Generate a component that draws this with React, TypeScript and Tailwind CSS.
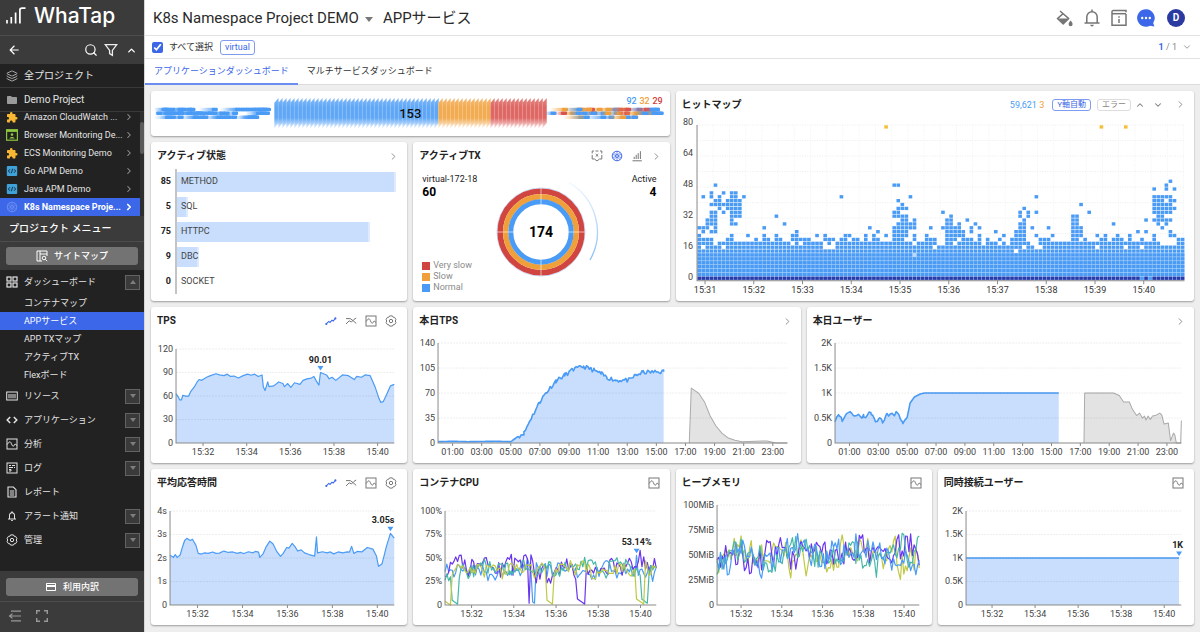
import React from "react";
import {
  MdArrowBack,
  MdCreditCard,
  MdExtension,
  MdFolder,
  MdFullscreen,
  MdNotificationsNone,
} from "react-icons/md";
import { ChevronDown, ChevronRight, ChevronUp, Layers, Search } from "lucide-react";

type Pt = [number, number];
type IconProps = { className?: string };

/* ---------- icons ---------- */

const WaveBoxIcon = ({ className = "size-[12px]" }: IconProps) => (
  <svg viewBox="0 0 12 12" className={className} fill="none" stroke="currentColor">
    <rect x="1" y="1" width="10" height="10" />
    <path d="M1 6.5 L3 4.2 C4 3.4 4.6 3.8 5.3 5.5 L6.2 7.3 C7 8.8 7.6 8.4 8.3 7.2 L9.2 6 L11 7.5" />
  </svg>
);

const TrendIcon = () => (
  <svg viewBox="0 0 12 12" className="size-[12px]" fill="none" stroke="#3f6ae8" strokeWidth="1.1">
    <path d="M1 9.2 L3.8 6.4 L5 7.4 L7 5.2 L8.2 6 L10.6 3.2" />
    <circle cx="1.3" cy="9" r=".5" />
    <circle cx="10.4" cy="3.4" r=".5" />
  </svg>
);

const CompareIcon = () => (
  <svg viewBox="0 0 12 12" className="size-[12px]" fill="none" stroke="#777" strokeWidth="1">
    <path d="M1 3.6 H5.2 L8 5.6 L11.2 8.4" />
    <path d="M1 9 L4.2 5.8 L6.4 7 L9 4.4 L11.2 3" />
  </svg>
);

const HexGearIcon = ({ className = "size-[12px]" }: IconProps) => (
  <svg viewBox="0 0 12 12" className={className} fill="none" stroke="currentColor">
    <path d="M4.6 .9 H7.4 L8.1 2.2 L9.6 2.4 L10.9 4.4 L10.3 6 L10.9 7.6 L9.6 9.6 L8.1 9.8 L7.4 11.1 H4.6 L3.9 9.8 L2.4 9.6 L1.1 7.6 L1.7 6 L1.1 4.4 L2.4 2.4 L3.9 2.2 Z" />
    <circle cx="6" cy="6" r="1.7" />
  </svg>
);

const GridIcon = () => (
  <svg viewBox="0 0 12 12" className="size-[12px]" fill="none" stroke="currentColor" strokeWidth="1.2">
    <rect x="1" y="1" width="4" height="4" />
    <rect x="7" y="1" width="4" height="4" />
    <rect x="1" y="7" width="4" height="4" />
    <rect x="7" y="7" width="4" height="4" />
  </svg>
);

const ResourceIcon = () => (
  <svg viewBox="0 0 12 12" className="size-[12px]" fill="none" stroke="currentColor">
    <rect x=".7" y="2" width="10.6" height="8" />
    <path d="M3 4 V8.3 M5 4 V8.3 M7 4 V8.3 M9 4 V8.3" />
  </svg>
);

const CodeIcon = () => (
  <svg viewBox="0 0 12 12" className="size-[12px]" fill="none" stroke="currentColor" strokeWidth="1.5">
    <path d="M4.2 3 L1.2 6 L4.2 9 M7.8 3 L10.8 6 L7.8 9" />
  </svg>
);

const LogIcon = () => (
  <svg viewBox="0 0 12 12" className="size-[12px]" fill="none" stroke="currentColor">
    <rect x="1" y="1" width="10" height="10" />
    <path d="M3 3.5 H5 M6 3.5 H9 M3 5.5 H7 M8 5.5 H9 M3 7.5 H5 V9 H3" />
  </svg>
);

const ReportIcon = () => (
  <svg viewBox="0 0 12 12" className="size-[12px]" fill="none" stroke="currentColor" strokeWidth="1.1">
    <path d="M2 1 H7.3 L10 3.7 V11 H2 Z M3.8 5 H8.2 M3.8 7 H8.2 M3.8 9 H8.2" />
  </svg>
);

const SitemapIcon = () => (
  <svg viewBox="0 0 12 12" className="size-[12px]" fill="none" stroke="currentColor">
    <path d="M11 6 V1 H1 V11 H6 M4 1 V11 M4 4 H11" />
    <circle cx="8" cy="8" r="1.8" />
    <path d="M9.4 9.4 L11.2 11.2" />
  </svg>
);

const BrowserIcon = () => (
  <svg viewBox="0 0 12 12" className="size-[12px]">
    <rect x=".6" y=".8" width="10.8" height="10.4" fill="#222" stroke="#8cc63f" strokeWidth="1.2" />
    <rect x=".5" y=".5" width="11" height="2.4" fill="#8cc63f" />
    <circle cx="6" cy="5.6" r="1.3" fill="#8cc63f" />
    <path d="M3.4 9.6 C3.6 7.4 8.4 7.4 8.6 9.6 Z" fill="#8cc63f" />
  </svg>
);

const ApmIcon = () => (
  <svg viewBox="0 0 12 12" className="size-[12px]">
    <rect x=".8" y="1" width="10.4" height="10" rx="1" fill="#3fa3da" />
    <path d="M4 4.2 L2.4 6 L4 7.8 M8 4.2 L9.6 6 L8 7.8 M6.6 3.8 L5.4 8.2" fill="none" stroke="#12324a" strokeWidth="1" />
  </svg>
);

const WheelIcon = ({ className = "size-[12px] text-[#3f6ae8]" }: IconProps) => (
  <svg viewBox="0 0 12 12" className={className} fill="none" stroke="currentColor" strokeWidth="1">
    <circle cx="6" cy="6" r="4.8" />
    <circle cx="6" cy="6" r="1.4" />
    <path d="M6 1 V4.4 M6 7.6 V11 M1.4 4.2 L4.6 5.5 M7.4 6.5 L10.6 7.8 M10.6 4.2 L7.4 5.5 M4.6 6.5 L1.4 7.8 M3 9.8 L5.2 7.2 M9 9.8 L6.8 7.2 M3 2.2 L5.2 4.8 M9 2.2 L6.8 4.8" strokeWidth=".7" />
  </svg>
);

const ShieldXIcon = () => (
  <svg viewBox="0 0 12 12" className="size-[12px]" fill="none" stroke="#777">
    <path d="M3 1 H1.2 V3.5 M9 1 H10.8 V3.5 M1.2 5 V9 H3.5 L6 11 L8.5 9 H10.8 V5 M4.5 1 H7.5" />
    <path d="M4.7 4 L7.3 6.6 M7.3 4 L4.7 6.6" />
  </svg>
);

const BarsIcon = () => (
  <svg viewBox="0 0 12 12" className="size-[12px]" fill="none" stroke="#777">
    <path d="M1.5 10.8 H10.8 M3.2 9 V6.8 M5.2 9 V4.8 M7.2 9 V3.2 M9.4 9 V1.2" />
  </svg>
);

const PaintIcon = () => (
  <svg viewBox="0 0 18 18" className="size-[18px]">
    <path d="M4 2 L12.8 9.6 L7.2 15 L1.4 9.6 L7.4 4.4" fill="none" stroke="#757575" strokeWidth="1.4" strokeLinejoin="round" />
    <path d="M2 9.4 H12.6 L7.2 14.8 Z" fill="#757575" />
    <path d="M14.6 11.6 C15.8 13.2 16.6 14.2 16.6 15.2 A2 2 0 0 1 12.6 15.2 C12.6 14.2 13.4 13.2 14.6 11.6 Z" fill="#757575" />
  </svg>
);

const ManualIcon = () => (
  <svg viewBox="0 0 18 18" className="size-[18px]" fill="none" stroke="#757575" strokeWidth="1.5">
    <path d="M16 5 V16.2 H2 V2.8 C2 1.8 2.6 1.4 3.4 1.4 H16 V3.2" />
    <path d="M2 4.7 H16" />
    <path d="M9 7.2 V8.8 M9 10 V14" />
  </svg>
);

const ChatIcon = () => (
  <svg viewBox="0 0 18 18" className="size-[18px]">
    <path d="M9 .2 A8.8 8.8 0 1 0 13 16.8 L17.4 17.6 L16.2 13.9 A8.8 8.8 0 0 0 9 .2 Z" fill="#3b67e8" />
    <circle cx="5.2" cy="9" r="1.2" fill="#fff" />
    <circle cx="9" cy="9" r="1.2" fill="#fff" />
    <circle cx="12.8" cy="9" r="1.2" fill="#fff" />
  </svg>
);

const FilterIcon = () => (
  <svg viewBox="0 0 14 14" className="size-[14px]" fill="none" stroke="#eee" strokeWidth="1.3">
    <path d="M1.2 1.6 H12.8 L8.4 7.4 V12.4 L5.6 10.6 V7.4 Z" />
  </svg>
);

const LogoMark = () => (
  <svg viewBox="0 0 20 18" className="h-[18px] w-[20px]" fill="none" stroke="#fff" strokeWidth="1.7">
    <path d="M1 13 V16.5 M5.3 10 V16.5 M9.6 5.5 V16.5 M13.9 16.5 V3 Q13.9 1.2 16 1.2 H19.5" />
  </svg>
);

/* ---------- sidebar ---------- */

const projects = [
  { name: "Amazon CloudWatch ...", icon: <MdExtension className="size-[13px] text-[#f7b733]" /> },
  { name: "Browser Monitoring De...", icon: <BrowserIcon /> },
  { name: "ECS Monitoring Demo", icon: <MdExtension className="size-[13px] text-[#f7b733]" /> },
  { name: "Go APM Demo", icon: <ApmIcon /> },
  { name: "Java APM Demo", icon: <ApmIcon /> },
  { name: "K8s Namespace Proje...", icon: <WheelIcon className="size-[12px] text-[#6d8ff2]" />, active: true },
];

const dashboards = ["コンテナマップ", "APPサービス", "APP TXマップ", "アクティブTX", "Flexボード"];

const menus: { name: string; icon: React.ReactNode; leaf?: boolean }[] = [
  { name: "リソース", icon: <ResourceIcon /> },
  { name: "アプリケーション", icon: <CodeIcon /> },
  { name: "分析", icon: <WaveBoxIcon /> },
  { name: "ログ", icon: <LogIcon /> },
  { name: "レポート", icon: <ReportIcon />, leaf: true },
  { name: "アラート通知", icon: <MdNotificationsNone className="size-[14px]" /> },
  { name: "管理", icon: <HexGearIcon /> },
];

function Toggle({ open, label }: { open?: boolean; label: string }) {
  return (
    <button
      aria-label={label}
      className="ml-auto mr-1 flex size-[15px] items-center justify-center border border-[#636363] bg-[#3a3a3a]"
    >
      <svg viewBox="0 0 6 4" className="h-[4px] w-[6px]" fill="#7d7d7d">
        {open ? <path d="M0 4 L3 0 L6 4 Z" /> : <path d="M0 0 H6 L3 4 Z" />}
      </svg>
    </button>
  );
}

function Sidebar() {
  return (
    <aside className="flex w-36 shrink-0 flex-col bg-[#222] text-[9px] text-[#e4e4e4]">
      <div className="flex h-9 items-center gap-2 border-b border-[#4d4d4d] bg-[#3b3b3b] pb-1 pl-1.5 text-white">
        <LogoMark />
        <span className="font-['Inter'] text-[21px] font-medium leading-6">WhaTap</span>
      </div>
      <div className="flex h-7 items-center gap-1.5 bg-[#3b3b3b] px-[7px] text-white">
        <button aria-label="戻る" className="mr-auto">
          <MdArrowBack className="size-[14px]" />
        </button>
        <button aria-label="検索">
          <Search className="size-[14px]" strokeWidth={2} />
        </button>
        <button aria-label="フィルター">
          <FilterIcon />
        </button>
        <button aria-label="閉じる" className="pl-0.5">
          <ChevronUp className="size-[11px]" strokeWidth={3} />
        </button>
      </div>
      <a href="#all" className="flex h-6 items-center gap-1.5 border-b border-[#3a3a3a] pl-1.5 text-[10px]">
        <Layers className="size-[12px] text-[#aaa]" strokeWidth={2} />
        全プロジェクト
      </a>
      <a href="#demo" className="flex h-6 items-center gap-1.5 border-b border-[#3a3a3a] pl-1.5 text-[10px]">
        <MdFolder className="size-[12px] text-[#9a9a9a]" />
        Demo Project
      </a>
      <div className="flex h-[104px]">
        <ul className="flex min-w-0 flex-1 flex-col justify-end overflow-hidden">
          {projects.map((p) => (
            <li key={p.name} className="shrink-0">
              <a
                href="#project"
                className={
                  p.active
                    ? "flex h-[18px] items-center gap-1.5 bg-[#3b67e8] pl-1.5 pr-1.5 font-bold text-white"
                    : "flex h-[18px] items-center gap-1.5 pl-1.5 pr-1.5"
                }
              >
                <span className="flex w-[12px] shrink-0 justify-center">{p.icon}</span>
                <span className="w-0 flex-1 whitespace-nowrap">{p.name}</span>
                <ChevronRight
                  className={p.active ? "size-[10px] shrink-0 text-white" : "size-[10px] shrink-0 text-[#999]"}
                  strokeWidth={p.active ? 4 : 2.5}
                />
              </a>
            </li>
          ))}
        </ul>
        <div className="w-1 bg-[#2e2e2e] pt-2.5">
          <div className="h-8 rounded-sm bg-[#5a5a5a]" />
        </div>
      </div>
      <div className="flex h-[25px] items-center bg-[#3b3b3b] pl-[9px] text-[10px] font-medium text-white">
        プロジェクト メニュー
      </div>
      <div className="border-t border-[#4d4d4d] bg-[#3b3b3b] px-1.5 pb-[5px] pt-[5px]">
        <button className="flex h-[18px] w-full items-center justify-center gap-1.5 rounded-[3px] bg-[#737373] font-medium text-white">
          <SitemapIcon />
          サイトマップ
        </button>
      </div>
      <nav>
        <div className="flex h-6 items-center gap-1.5 pl-1.5">
          <GridIcon />
          ダッシューボード
          <Toggle open label="ダッシューボードを閉じる" />
        </div>
        {dashboards.map((d, i) => (
          <a
            key={d}
            href="#dashboard"
            className={
              i === 1
                ? "flex h-[18px] items-center bg-[#3b67e8] pl-6 pt-px text-white"
                : "flex h-[18px] items-center pl-6 pt-px"
            }
          >
            {d}
          </a>
        ))}
        {menus.map((m) => (
          <div key={m.name} className="flex h-6 items-center gap-1.5 pl-1.5">
            <span className="flex w-3 shrink-0 justify-center">{m.icon}</span>
            {m.name}
            {!m.leaf && <Toggle label={m.name} />}
          </div>
        ))}
      </nav>
      <div className="mt-auto bg-[#3b3b3b] px-1.5 pb-[5px] pt-[7px]">
        <button className="flex h-[18px] w-full items-center justify-center gap-1.5 rounded-[3px] bg-[#737373] font-medium text-white">
          <MdCreditCard className="size-[12px]" />
          利用内訳
        </button>
      </div>
      <div className="flex h-[31px] items-center gap-3 border-t border-[#4d4d4d] bg-[#3b3b3b] pb-0.5 pl-2 text-[#999]">
        <button aria-label="メニューを折りたたむ">
          <svg viewBox="0 0 14 12" className="h-[12px] w-[14px]" fill="none" stroke="currentColor" strokeWidth="1.2">
            <path d="M3 1.2 H13 M1.5 6 H13 M3 10.8 H13 M4.5 3.6 L1.5 6 L4.5 8.4" />
          </svg>
        </button>
        <button aria-label="全画面">
          <svg viewBox="0 0 12 12" className="ml-0.5 size-[12px]" fill="none" stroke="currentColor" strokeWidth="1.4">
            <path d="M.7 4 V.7 H4 M8 .7 H11.3 V4 M11.3 8 V11.3 H8 M4 11.3 H.7 V8" />
          </svg>
        </button>
      </div>
    </aside>
  );
}

/* ---------- cards ---------- */

function Card({
  title,
  tools,
  className,
  children,
}: {
  title?: string;
  tools?: React.ReactNode;
  className: string;
  children: React.ReactNode;
}) {
  return (
    <section className={`min-w-0 overflow-hidden rounded-[3px] bg-white shadow-[0_1px_2px_rgba(0,0,0,0.35)] ${className}`}>
      {title && (
        <header className="flex h-[26px] items-center justify-between pl-1.5 pr-2.5 pt-0.5">
          <h2 className="text-[10px] font-bold text-[#222]">{title}</h2>
          <div className="flex items-center gap-2 text-[#777]">{tools}</div>
        </header>
      )}
      {children}
    </section>
  );
}

const More = () => (
  <button aria-label="詳細" className="-mr-0.5">
    <ChevronRight className="size-[11px] text-[#888]" strokeWidth={2} />
  </button>
);

const SeriesTools = () => (
  <>
    <button aria-label="折れ線">
      <TrendIcon />
    </button>
    <button aria-label="比較">
      <CompareIcon />
    </button>
    <button aria-label="ウィジェット">
      <WaveBoxIcon />
    </button>
    <button aria-label="設定">
      <HexGearIcon />
    </button>
  </>
);

const BoxTool = () => (
  <button aria-label="ウィジェット">
    <WaveBoxIcon />
  </button>
);

/* ---------- charts ---------- */

type Series = { points: Pt[]; color: string; fill?: string; width?: number };

function Chart({
  width,
  height = 130,
  left,
  right,
  top = 16,
  bottom = 110,
  xMax,
  yMax,
  yTicks,
  xTicks,
  series,
  marker,
}: {
  width: number;
  height?: number;
  left: number;
  right: number;
  top?: number;
  bottom?: number;
  xMax: number;
  yMax: number;
  yTicks: string[];
  xTicks: [number, string][];
  series: Series[];
  marker?: { x: number; y: number; text: string; end?: boolean };
}) {
  const sx = (x: number) => left + (x / xMax) * (right - left);
  const sy = (y: number) => bottom - (y / yMax) * (bottom - top);
  const line = (p: Pt[]) => p.map(([x, y]) => `${sx(x).toFixed(1)},${sy(y).toFixed(1)}`).join(" ");
  return (
    <svg viewBox={`0 0 ${width} ${height}`} className="block h-auto w-full text-[9px]">
      {series.map((s, i) => (
        <g key={i}>
          {s.fill && (
            <polygon
              points={`${sx(s.points[0][0])},${bottom} ${line(s.points)} ${sx(s.points[s.points.length - 1][0])},${bottom}`}
              fill={s.fill}
            />
          )}
          <polyline points={line(s.points)} fill="none" stroke={s.color} strokeWidth={s.width ?? 1.2} strokeLinejoin="round" />
        </g>
      ))}
      {yTicks.map((t, i) => {
        const y = top + ((bottom - top) * i) / (yTicks.length - 1);
        return (
          <g key={t}>
            {i < yTicks.length - 1 && (
              <line x1={left} x2={right} y1={y} y2={y} stroke="#000" strokeOpacity=".09" strokeDasharray="2 1" strokeWidth=".8" />
            )}
            <text x={left - 3} y={y + 2.5} textAnchor="end" fill="#444">
              {t}
            </text>
          </g>
        );
      })}
      <path d={`M${left} ${top} V${bottom} H${right}`} fill="none" stroke="#8a8a8a" />
      {xTicks.map(([x, t]) => (
        <g key={t}>
          <line x1={x} x2={x} y1={bottom} y2={bottom + 3} stroke="#8a8a8a" />
          <text x={x} y={bottom + 12} textAnchor="middle" fill="#444">
            {t}
          </text>
        </g>
      ))}
      {marker && (
        <g>
          <text
            x={sx(marker.x) + (marker.end ? 4 : 0)}
            y={sy(marker.y) - 10}
            textAnchor={marker.end ? "end" : "middle"}
            fontWeight="700"
            fill="#222"
          >
            {marker.text}
          </text>
          <path d={`M${sx(marker.x) - 3} ${sy(marker.y) - 6.5} h6 l-3 4.5 z`} fill="#4a9bf5" />
        </g>
      )}
    </svg>
  );
}

const BLUE = "#4a9bf5";
const BLUE_FILL = "#c8defc";

function seeded(seed: number) {
  let s = seed;
  return () => {
    s = (s * 16807) % 2147483647;
    return s / 2147483647;
  };
}

/* Densify a curve and add a small jitter to it. */
function jitter(points: Pt[], step: number, amount: number, seed: number): Pt[] {
  const rnd = seeded(seed);
  const out: Pt[] = [];
  for (let i = 0; i < points.length - 1; i++) {
    const [x0, y0] = points[i];
    const [x1, y1] = points[i + 1];
    for (let x = x0; x < x1; x += step) {
      const y = y0 + ((y1 - y0) * (x - x0)) / (x1 - x0);
      out.push([x, y < 10 ? y : y + (rnd() - 0.5) * amount]);
    }
  }
  out.push(points[points.length - 1]);
  return out;
}

/* A noisy band around a level; dips overwrite a range with given values. */
function band(seed: number, level: number, amp: number, dips: [number, number, number][] = []): Pt[] {
  const rnd = seeded(seed);
  const out: Pt[] = [];
  let drift = 0;
  for (let i = 0; i <= 118; i++) {
    drift = drift * 0.65 + (rnd() - 0.5) * amp;
    let v = level + drift + (rnd() - 0.5) * amp;
    for (const [a, b, low] of dips) if (i >= a && i <= b) v = low + (b - i) * 1.4;
    out.push([i / 1.18, v]);
  }
  return out;
}

const minutes = (start: number, step: number): [number, string][] =>
  ["15:32", "15:34", "15:36", "15:38", "15:40"].map((t, i) => [start + step * i, t]);

const hours = (left: number, right: number): [number, string][] =>
  Array.from({ length: 12 }, (_, i) => {
    const h = i * 2 + 1;
    return [left + ((right - left) * h) / 24, `${String(h).padStart(2, "0")}:00`];
  });

const tps: Pt[] = [
  [0, 63], [1, 59], [1.7, 55], [2.5, 55], [3.1, 61], [4.3, 60], [5.8, 60], [6.8, 66], [8.2, 71], [9.7, 78], [10.6, 81],
  [11.8, 80], [14, 84], [15.8, 86], [18.3, 88.5], [20, 87], [22, 86], [23.5, 88], [25, 85], [26.6, 85.5], [28.6, 83],
  [30.8, 86], [32.8, 88], [34.3, 86.5], [36, 88], [37.7, 85], [39.4, 87], [40, 72], [40.8, 67], [42, 78], [42.6, 72],
  [44.8, 73], [47, 78], [49, 76], [49.7, 72], [51.2, 76], [52.6, 71], [54.3, 77], [56.8, 75], [58.2, 80], [60, 82],
  [62, 83], [63.2, 85], [64.3, 79], [65.5, 74], [66.2, 90], [69, 87], [70.2, 82], [71.5, 84], [73.2, 80], [76.3, 87],
  [79, 86], [81.7, 81], [82.8, 85], [85, 84], [86.6, 87], [89, 86], [91.2, 72], [93, 57], [93.8, 52], [95, 53],
  [96.2, 60], [98.3, 73], [100, 75],
];

const response: Pt[] = [
  [0, 2.12], [1.5, 2.03], [2.3, 2.15], [3.2, 2.03], [4.5, 2.13], [5.5, 2.45], [6.5, 2.75], [7.5, 2.84], [9, 2.75],
  [10, 2.8], [11.5, 2.55], [12.6, 2.2], [14, 2.17], [15.5, 2.22], [17, 2.2], [19, 2.26], [20.5, 2.2], [22, 2.21],
  [24, 2.3], [26, 2.24], [28, 2.26], [30, 2.2], [31.5, 2.24], [33, 2.19], [35, 2.27], [37, 2.22], [38, 2.28],
  [39.5, 2.25], [40, 2.03], [41.5, 2.18], [43, 2.5], [44.5, 2.72], [46, 2.6], [47.5, 2.3], [49.3, 2.07], [50.5, 2.2],
  [52, 2.45], [53, 2.42], [54.5, 2.62], [56, 2.45], [57, 2.3], [58.5, 2.35], [60, 2.22], [62, 2.15], [64.5, 2.08],
  [65.3, 2.9], [65.8, 2.22], [68, 2.27], [70, 2.22], [71.5, 2.26], [73, 2.18], [75, 2.26], [77, 2.22], [79, 2.26],
  [80, 2.25], [81, 2.5], [82, 2.2], [83.5, 2.28], [85.5, 2.26], [88, 2.45],
  [90.5, 2.38], [92, 2.1], [93, 1.65], [94.5, 1.75], [95.5, 2.1], [96.5, 2.5], [98.3, 3.05], [100, 2.85],
];

const todayTps = jitter(
  [
    [0, 2], [1, 2.5], [2, 2], [4, 2.5], [5, 2], [5.4, 8], [5.9, 14], [6.4, 35], [7, 58], [7.4, 70], [8.1, 87], [8.7, 95],
    [9.3, 103], [10, 107], [10.7, 102], [11.2, 97], [11.6, 92], [12.2, 88], [13.1, 88], [13.6, 95], [14.1, 99], [15.5, 100],
  ],
  0.1, 6, 11
);
const todayTpsOld: Pt[] = [
  [17.26, 0], [17.4, 77], [17.9, 70], [18.3, 58], [18.7, 38], [19.1, 24], [19.5, 14], [19.95, 7], [20.4, 4], [20.9, 2],
  [22.3, 3], [22.6, 3], [23.2, 0], [24, 0],
];

const todayUsers: Pt[] = [
  ...jitter(
    [[0, 47], [0.3, 56], [0.5, 47], [0.8, 60], [1.5, 57], [2, 53], [2.5, 60], [2.8, 45], [3.1, 50], [3.3, 42], [3.6, 58],
      [4, 55], [4.3, 60], [4.7, 42], [5, 52]],
    0.12, 9, 5
  ),
  [5.2, 80], [5.5, 92], [5.9, 98], [6.2, 100], [15.5, 100],
];
const todayUsersOld: Pt[] = [
  [17.25, 0], [17.3, 100], [19.3, 100], [19.7, 95], [20, 82], [20.4, 82], [20.6, 68], [20.9, 55], [21.1, 60], [21.3, 50],
  [21.45, 54], [21.55, 46], [21.7, 54], [21.85, 47], [22, 54], [22.2, 55], [22.5, 60], [22.65, 56], [22.8, 38],
  [23.1, 40], [23.25, 5], [23.45, 20], [23.55, 16], [23.65, 0], [23.95, 0], [24, 45],
];

const cpu: Series[] = [
  { color: "#4a9bf5", points: band(37, 37, 11, [[49, 50, 2], [107, 107, 53]]) },
  { color: "#6a35f0", points: band(101, 41, 15, [[47, 47, 2], [74, 78, 1]]) },
  { color: "#46b8a8", points: band(23, 38, 12, [[4, 7, 1], [110, 113, 2]]) },
  { color: "#c0c945", points: band(71, 37, 11, [[0, 3, 0], [57, 60, 1], [107, 111, 1]]) },
];

const heap: Series[] = [
  { color: "#c0c945", points: band(7, 48, 19) },
  { color: "#6a35f0", points: band(211, 50, 19) },
  { color: "#46b8a8", points: band(31, 49, 20) },
  { color: "#4a9bf5", points: band(59, 49, 19) },
];

/* ---------- heat map ---------- */

/* [column, first row, last row] of the cells that stick out of the solid base. */
const spikes: [number, number, number][] = [
  [0, 10, 11], [0, 13, 13], [1, 9, 10], [1, 12, 13], [1, 21, 21], [2, 10, 10], [2, 13, 15], [3, 10, 10], [3, 12, 12],
  [3, 14, 17], [3, 19, 19], [3, 21, 22], [4, 12, 17], [4, 19, 20], [4, 24, 24], [5, 18, 21], [6, 19, 19], [6, 17, 17],
  [6, 22, 22], [7, 18, 20], [7, 10, 10], [8, 10, 11], [8, 14, 22], [9, 14, 14], [9, 16, 22], [10, 16, 20], [11, 21, 21],
  [12, 11, 11], [14, 10, 10], [16, 10, 11], [16, 13, 13], [17, 10, 10], [19, 10, 11], [19, 16, 16], [20, 10, 10],
  [21, 14, 14], [23, 10, 11], [24, 10, 12], [25, 10, 10], [26, 10, 10], [27, 10, 10], [29, 11, 11], [31, 10, 11], [32, 10, 10],
  [33, 10, 10], [35, 10, 10], [35, 21, 21], [36, 10, 11], [37, 11, 11], [38, 10, 10], [39, 10, 10], [41, 10, 11], [42, 13, 13],
  [43, 10, 11], [44, 10, 10], [44, 12, 12], [46, 11, 11], [48, 10, 13], [48, 16, 17], [48, 24, 24], [49, 10, 14],
  [49, 16, 18], [49, 20, 20], [49, 24, 24], [50, 10, 16], [50, 18, 19], [51, 11, 16], [51, 18, 18], [52, 13, 14],
  [52, 21, 21], [53, 10, 11], [53, 13, 15], [56, 10, 11], [57, 10, 10], [57, 13, 13], [58, 10, 10], [60, 13, 13],
  [60, 17, 17], [61, 10, 15], [62, 10, 16], [63, 10, 13], [64, 11, 14], [65, 10, 12], [66, 10, 10], [66, 15, 15],
  [67, 10, 10], [67, 12, 13], [68, 14, 14], [69, 10, 11], [69, 13, 13], [71, 10, 10], [73, 12, 12], [74, 10, 10], [75, 11, 11],
  [77, 10, 10], [78, 10, 12], [79, 10, 14], [79, 16, 17], [80, 10, 15], [80, 18, 18], [81, 16, 17], [82, 13, 13],
  [83, 11, 11], [83, 17, 17], [83, 21, 21], [84, 10, 10], [85, 10, 10], [86, 10, 10], [86, 13, 13], [87, 11, 11],
  [92, 10, 16], [93, 10, 16], [94, 11, 13], [94, 19, 19], [95, 10, 10], [96, 17, 17], [98, 11, 11], [99, 10, 10], [100, 10, 11],
  [102, 10, 10], [102, 14, 14], [103, 10, 11], [104, 10, 10], [106, 10, 11], [108, 12, 12], [109, 10, 10], [110, 12, 12],
  [110, 15, 15], [112, 10, 11], [112, 15, 15], [112, 17, 21], [112, 23, 23], [113, 14, 18],
  [113, 19, 21], [114, 13, 13], [114, 15, 21], [115, 14, 15], [115, 17, 19], [115, 21, 21], [115, 23, 24],
  [116, 11, 12], [116, 15, 15], [116, 17, 21], [116, 25, 25], [117, 18, 18], [117, 20, 20], [117, 23, 23],
  [117, 11, 11], [118, 10, 10], [119, 10, 10],
];
const holes = new Set([
  "1-8", "4-9", "6-8", "31-9", "31-8", "32-8", "33-9", "33-8", "23-9", "25-9", "53-6", "53-9", "58-8", "59-9", "60-9",
  "63-9", "70-9", "76-9", "78-7", "80-8", "82-9", "83-9", "83-8", "84-8", "98-8", "105-8", "109-8", "114-9", "115-9", "116-9",
  "117-9", "74-9",
]);

function HeatMap() {
  const left = 21;
  const bottom = 163;
  const cw = 487 / 120;
  const ch = 155 / 40;
  const cells: React.ReactNode[] = [];
  const put = (c: number, r: number, fill: string) =>
    cells.push(
      <rect key={`${c}-${r}`} x={left + c * cw + 0.4} y={bottom - (r + 1) * ch + 0.3} width="3.6" height="3.3" fill={fill} />
    );
  for (let c = 0; c < 120; c++)
    for (let r = 0; r < 10; r++)
      if (!holes.has(`${c}-${r}`)) put(c, r, r === 0 && c !== 109 && c !== 111 ? "#2a3aa8" : BLUE);
  spikes.forEach(([c, a, b]) => {
    for (let r = Math.max(a, 10); r <= b; r++) put(c, r, BLUE);
  });
  [46, 99, 105].forEach((c) => put(c, 39, "#f5bf3a"));
  return (
    <svg viewBox="0 0 518 184" className="block h-auto w-full text-[9px]">
      {Array.from({ length: 10 }, (_, i) => (
        <line key={`h${i}`} x1={left} x2="508" y1={8 + i * 15.5} y2={8 + i * 15.5} stroke="#e8e8e8" strokeDasharray="1 1.5" strokeWidth=".8" />
      ))}
      {Array.from({ length: 30 }, (_, i) => (
        <line key={`v${i}`} x1={left + 16.2 * (i + 1)} x2={left + 16.2 * (i + 1)} y1="8" y2={bottom} stroke="#efefef" strokeDasharray="1 1.5" strokeWidth=".8" />
      ))}
      <rect x={left} y={bottom - 7 * ch} width="487" height={7 * ch} fill={BLUE} opacity=".4" />
      {cells}
      <path d={`M${left} 8 V${bottom + 0.5} H508`} fill="none" stroke="#8a8a8a" />
      {["80", "64", "48", "32", "16", "0"].map((t, i) => (
        <text key={t} x="17" y={8 + i * 31} textAnchor="end" fill="#444">
          {t}
        </text>
      ))}
      {Array.from({ length: 10 }, (_, i) => {
        const x = left + 8 + i * 48.7;
        return (
          <g key={i}>
            <line x1={x} x2={x} y1={bottom} y2={bottom + 4} stroke="#8a8a8a" />
            <text x={x} y={bottom + 13} textAnchor="middle" fill="#333">
              {`15:${31 + i}`}
            </text>
          </g>
        );
      })}
    </svg>
  );
}

/* ---------- transaction stream ---------- */

function Stream() {
  const rnd = seeded(97);
  const dots: React.ReactNode[] = [];
  const dot = (x: number, y: number, k: string, w: number) =>
    dots.push(
      <g key={dots.length}>
        <rect x={Math.max(3, x - w)} y={y - 1.7} width={w - 2} height="3.4" fill={`url(#tail-${k})`} />
        <rect x={x - 4} y={y - 1.7} width="6" height="3.4" rx="1.2" fill={k === "b" ? "#4a9bf5" : k === "o" ? "#f0a03a" : "#d9534f"} />
      </g>
    );
  for (let i = 0; i < 26; i++) dot(9 + rnd() * 112, 22.3, "b", 8 + rnd() * 10);
  for (let i = 0; i < 17; i++) {
    dot(9 + rnd() * 112, 18.5, "b", 12 + rnd() * 8);
    dot(9 + rnd() * 112, 26.3, "b", 12 + rnd() * 8);
  }
  const kind = () => {
    const k = rnd();
    return k < 0.45 ? "b" : k < 0.9 ? "o" : "r";
  };
  for (let i = 0; i < 26; i++) dot(402 + rnd() * 111, 22.3, kind(), 8 + rnd() * 10);
  for (let i = 0; i < 16; i++) dot(402 + rnd() * 111, 18.5, kind(), 10 + rnd() * 10);
  for (let i = 0; i < 8; i++) dot(430 + rnd() * 60, 26.3, kind(), 12 + rnd() * 8);
  const colors: Record<string, string> = { b: "#4a9bf5", o: "#f0a03a", r: "#d9534f" };
  const slices = Array.from({ length: 68 }, (_, i) => 123 + i * 4);
  return (
    <svg viewBox="0 0 518 45" className="block h-auto w-full">
      <defs>
        {Object.entries(colors).map(([k, c]) => (
          <React.Fragment key={k}>
            <linearGradient id={`tail-${k}`}>
              <stop offset="0" stopColor={c} stopOpacity="0" />
              <stop offset="1" stopColor={c} stopOpacity=".8" />
            </linearGradient>
            <linearGradient id={`slice-${k}`} x2="0" y2="1">
              <stop offset="0" stopColor={c} stopOpacity=".7" />
              <stop offset=".3" stopColor={c} stopOpacity=".88" />
              <stop offset=".65" stopColor={c} stopOpacity=".88" />
              <stop offset="1" stopColor={c} stopOpacity=".12" />
            </linearGradient>
          </React.Fragment>
        ))}
      </defs>
      {dots}
      {slices.map((x) => {
        const k = x < 287 ? "b" : x < 339 ? "o" : "r";
        return (
          <g key={x}>
            <path d={`M${x} 12 L${x + 4.4} 7 V32 L${x} 37.5 Z`} fill={`url(#slice-${k})`} />
            <path d={`M${x + 0.2} 12 V36`} stroke="#fff" strokeOpacity=".3" strokeWidth=".8" fill="none" />
          </g>
        );
      })}
      <text x="259" y="26.5" textAnchor="middle" fontSize="13" fontWeight="500" fill="#111">
        153
      </text>
      <g fontSize="9" fontWeight="500">
        <text x="475" y="13" fill="#4a9bf5">92</text>
        <text x="488" y="13" fill="#f0a03a">32</text>
        <text x="501" y="13" fill="#d23c38">29</text>
      </g>
    </svg>
  );
}

/* ---------- active widgets ---------- */

const statuses = [
  { name: "METHOD", count: 85, width: 100 },
  { name: "SQL", count: 5, width: 5 },
  { name: "HTTPC", count: 75, width: 88 },
  { name: "DBC", count: 9, width: 10 },
  { name: "SOCKET", count: 0, width: 0 },
];

function ActiveStatus() {
  return (
    <ul className="pr-[11px] pt-px text-[9px]">
      {statuses.map((s) => (
        <li key={s.name} className="flex h-[25px]">
          <span className="w-[26px] border-r-2 border-[#c4c4c4] pr-1 text-right font-bold leading-[25px] text-[#222]">
            {s.count}
          </span>
          <div className="grid flex-1 items-center">
            <div
              className={
                s.width
                  ? "col-start-1 row-start-1 h-5 border-r-2 border-[#dfebfd] bg-[#c8defc]"
                  : "col-start-1 row-start-1 h-5"
              }
              style={{ width: `${s.width}%` }}
            />
            <span className="col-start-1 row-start-1 pl-1 text-[#444]">{s.name}</span>
          </div>
        </li>
      ))}
    </ul>
  );
}

function ActiveTx() {
  const legend = [
    { name: "Very slow", box: "size-2 bg-[#d0453f]" },
    { name: "Slow", box: "size-2 bg-[#f0a03a]" },
    { name: "Normal", box: "size-2 bg-[#4a9bf5]" },
  ];
  return (
    <div className="flex h-[133px] justify-between px-[9px] pb-2 pt-[5px] text-[9px] text-[#222]">
      <div className="flex w-14 flex-col justify-between">
        <div>
          <div className="whitespace-nowrap leading-[13px]">virtual-172-18</div>
          <div className="text-xs font-bold leading-3 text-black">60</div>
        </div>
        <ul>
          {legend.map((l) => (
            <li key={l.name} className="flex items-center gap-[3px] whitespace-nowrap leading-[11px] text-[#8a8a8a]">
              <span className={l.box} />
              {l.name}
            </li>
          ))}
        </ul>
      </div>
      <svg viewBox="0 0 120 120" className="size-[120px] shrink-0">
        <defs>
          <linearGradient id="sweep" x2="0" y2="1">
            <stop offset="0" stopColor="#8abcf8" stopOpacity=".1" />
            <stop offset="1" stopColor="#8abcf8" />
          </linearGradient>
        </defs>
        <g fill="none">
          <circle cx="60" cy="59" r="44" stroke="#b9cdf2" strokeWidth=".8" />
          <circle cx="60" cy="59" r="40.8" stroke="#d0453f" strokeWidth="5.6" />
          <circle cx="60" cy="59" r="35.3" stroke="#f0a03a" strokeWidth="5.4" />
          <circle cx="60" cy="59" r="30.2" stroke="#4a9bf5" strokeWidth="5" />
          <path d="M60 15 V31.4 M60 86.6 V103 M16 59 H32.4 M87.6 59 H104" stroke="#fff" strokeOpacity=".6" />
          <path d="M88 9.6 A57 57 0 0 1 109 87" stroke="url(#sweep)" strokeWidth="1.3" />
        </g>
        <text x="60" y="63.5" textAnchor="middle" fontSize="14" fontWeight="700" fill="#000">
          174
        </text>
      </svg>
      <div className="w-14 pr-1 text-right">
        <div className="leading-[13px]">Active</div>
        <div className="text-xs font-bold leading-3 text-black">4</div>
      </div>
    </div>
  );
}

/* ---------- page ---------- */

export default function App() {
  return (
    <div className="flex min-h-screen bg-[#eee] font-[Roboto,'Noto_Sans_CJK_JP',sans-serif] leading-none">
      <Sidebar />
      <main className="flex min-w-0 flex-1 flex-col border-l border-[#d5d5d5]">
        <header className="flex h-9 items-center border-b border-[#e2e2e2] bg-white pl-2 pr-[15px]">
          <h1 className="flex items-center gap-1.5 text-[15px] leading-5 text-[#2a2a2a]">
            K8s Namespace Project DEMO
            <svg viewBox="0 0 8 5" className="mt-1 h-[5px] w-[8px]" fill="#777">
              <path d="M0 0 H8 L4 5 Z" />
            </svg>
            <span className="ml-1">APPサービス</span>
          </h1>
          <div className="ml-auto flex items-center gap-[9px]">
            <button aria-label="テーマ">
              <PaintIcon />
            </button>
            <button aria-label="通知">
              <svg viewBox="0 0 18 18" className="size-[18px]" fill="none" stroke="#757575" strokeWidth="1.5">
                <path d="M1.5 14 H16.5 M3.8 14 V8 A5.2 5.2 0 0 1 14.2 8 V14 M9 .6 V3" />
                <path d="M7.2 15.8 H10.8 A1.8 1.6 0 0 1 7.2 15.8 Z" fill="#757575" stroke="none" />
              </svg>
            </button>
            <button aria-label="マニュアル">
              <ManualIcon />
            </button>
            <button aria-label="チャット">
              <ChatIcon />
            </button>
            <button className="ml-[3px] size-[18px] rounded-full bg-[#2b3aa0] text-[10px] font-bold text-white">D</button>
          </div>
        </header>
        <div className="flex h-[23px] items-center border-b border-[#e2e2e2] bg-white pl-[7px] pr-2 text-[9px] text-[#333]">
          <label className="flex items-center gap-1.5">
            <input type="checkbox" defaultChecked className="size-[11px] accent-[#3b67e8]" />
            すべて選択
          </label>
          <button className="ml-[7px] h-[15px] rounded-[3px] border border-[#7f9cf0] px-1 text-[#3b67e8]">virtual</button>
          <div className="ml-auto flex items-center gap-[5px]">
            <span className="text-[#888]">
              <b className="text-[#3b67e8]">1</b> / 1
            </span>
            <ChevronDown className="size-[10px] text-[#888]" strokeWidth={2} />
          </div>
        </div>
        <nav className="flex h-[26px] border-b border-[#dcdcdc] bg-white text-[9px] text-[#333]">
          <a href="#app" className="-mb-px flex items-center border-b-2 border-[#6b8cf0] pl-[9px] pr-[9px] text-[#3b67e8]">
            アプリケーションダッシュボード
          </a>
          <a href="#multi" className="flex items-center px-[9px]">
            マルチサービスダッシュボード
          </a>
        </nav>

        <div className="grid grid-cols-8 items-start gap-1.5 p-1.5">
          <Card className="col-span-4">
            <Stream />
          </Card>
          <Card
            className="col-span-4 row-span-2"
            title="ヒットマップ"
            tools={
              <>
                <span className="text-[9px]">
                  <span className="text-[#4a9bf5]">59,621</span> <span className="text-[#f0a03a]">3</span>
                </span>
                <button className="h-[12px] rounded-[3px] border border-[#7f9cf0] px-1 text-[8px] leading-[10px] text-[#3b67e8]">
                  Y軸自動
                </button>
                <button className="-ml-0.5 h-[12px] rounded-[3px] border border-[#ddd] px-1 text-[8px] leading-[10px] text-[#888]">
                  エラー
                </button>
                <button aria-label="上げる" className="-ml-1">
                  <ChevronUp className="size-[10px]" strokeWidth={2.5} />
                </button>
                <button aria-label="下げる">
                  <ChevronDown className="size-[10px]" strokeWidth={2.5} />
                </button>
                <span className="ml-1">
                  <More />
                </span>
              </>
            }
          >
            <HeatMap />
          </Card>
          <Card className="col-span-2 h-[159px]" title="アクティブ状態" tools={<More />}>
            <ActiveStatus />
          </Card>
          <Card
            className="col-span-2 h-[159px]"
            title="アクティブTX"
            tools={
              <>
                <button aria-label="フィルター">
                  <ShieldXIcon />
                </button>
                <button aria-label="円">
                  <WheelIcon />
                </button>
                <button aria-label="棒">
                  <BarsIcon />
                </button>
                <More />
              </>
            }
          >
            <ActiveTx />
          </Card>

          <Card className="col-span-2" title="TPS" tools={<SeriesTools />}>
            <Chart
              width={256}
              left={25}
              right={243}
              xMax={100}
              yMax={120}
              yTicks={["120", "90", "60", "30", "0"]}
              xTicks={minutes(52, 43.6)}
              series={[{ points: tps, color: BLUE, fill: BLUE_FILL }]}
              marker={{ x: 66.2, y: 90, text: "90.01" }}
            />
          </Card>
          <Card className="col-span-3" title="本日TPS" tools={<More />}>
            <Chart
              width={387}
              left={25}
              right={374}
              top={10}
              xMax={24}
              yMax={140}
              yTicks={["140", "105", "70", "35", "0"]}
              xTicks={hours(25, 374)}
              series={[
                { points: todayTps, color: BLUE, fill: BLUE_FILL, width: 1.6 },
                { points: todayTpsOld, color: "#aaa", fill: "#e3e3e3", width: 1 },
              ]}
            />
          </Card>
          <Card className="col-span-3" title="本日ユーザー" tools={<More />}>
            <Chart
              width={387}
              left={28}
              right={374}
              top={10}
              xMax={24}
              yMax={200}
              yTicks={["2K", "1.5K", "1K", "0.5K", "0"]}
              xTicks={hours(28, 374)}
              series={[
                { points: todayUsers, color: BLUE, fill: BLUE_FILL, width: 1.6 },
                { points: todayUsersOld, color: "#aaa", fill: "#e3e3e3", width: 1 },
              ]}
            />
          </Card>

          <Card className="col-span-2" title="平均応答時間" tools={<SeriesTools />}>
            <Chart
              width={256}
              left={19}
              right={243}
              xMax={100}
              yMax={4}
              yTicks={["4s", "3s", "2s", "1s", "0"]}
              xTicks={minutes(46.5, 44.9)}
              series={[{ points: response, color: BLUE, fill: BLUE_FILL }]}
              marker={{ x: 98.3, y: 3.05, text: "3.05s", end: true }}
            />
          </Card>
          <Card className="col-span-2" title="コンテナCPU" tools={<BoxTool />}>
            <Chart
              width={256}
              left={32}
              right={243}
              xMax={100}
              yMax={100}
              yTicks={["100%", "75%", "50%", "25%", "0"]}
              xTicks={minutes(58.5, 42.2)}
              series={cpu}
              marker={{ x: 90.7, y: 53, text: "53.14%" }}
            />
          </Card>
          <Card className="col-span-2" title="ヒープメモリ" tools={<BoxTool />}>
            <Chart
              width={256}
              left={41}
              right={243}
              top={10}
              xMax={100}
              yMax={100}
              yTicks={["100MiB", "75MiB", "50MiB", "25MiB", "0"]}
              xTicks={minutes(65, 40.7)}
              series={heap}
            />
          </Card>
          <Card className="col-span-2" title="同時接続ユーザー" tools={<BoxTool />}>
            <Chart
              width={256}
              left={28}
              right={243}
              xMax={100}
              yMax={2}
              yTicks={["2K", "1.5K", "1K", "0.5K", "0"]}
              xTicks={minutes(54, 43)}
              series={[{ points: [[0, 1], [99, 1]], color: BLUE, fill: BLUE_FILL, width: 1.4 }]}
              marker={{ x: 99, y: 1, text: "1K", end: true }}
            />
          </Card>
        </div>
      </main>
    </div>
  );
}
